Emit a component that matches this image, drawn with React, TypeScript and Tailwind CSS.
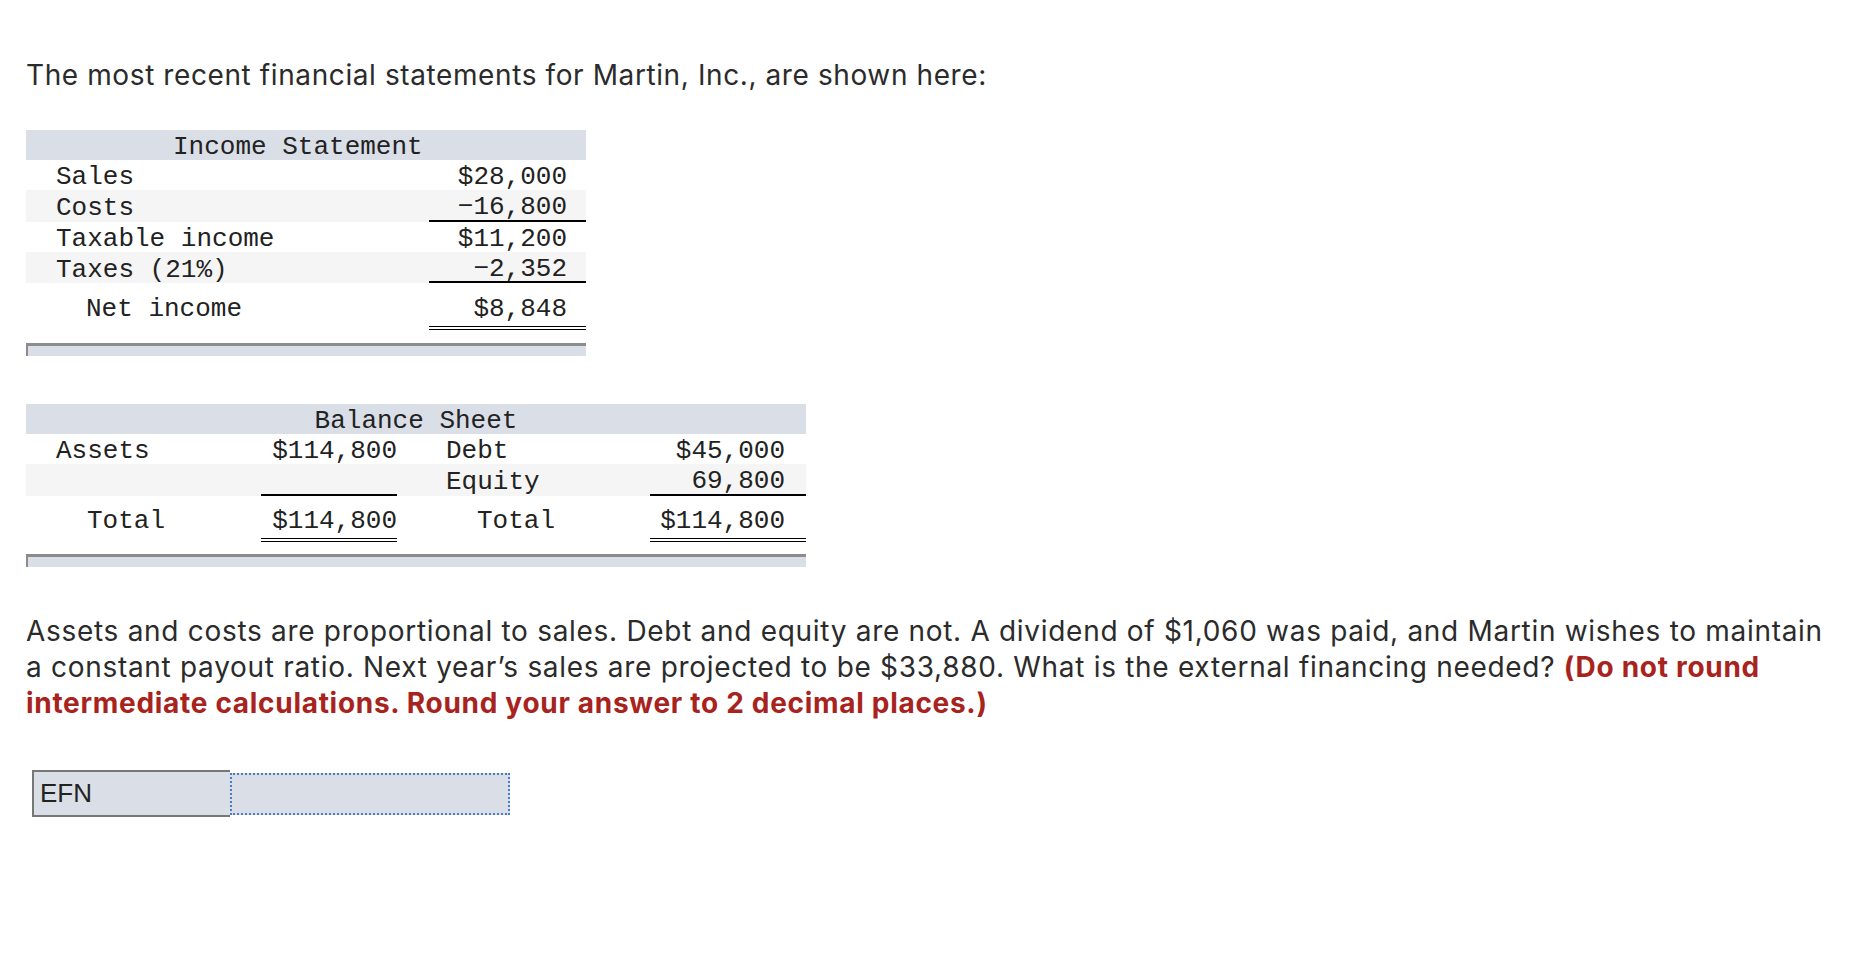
import React from 'react';

const mono = { fontFamily: '"Liberation Mono", "Courier New", monospace' };
const sans = { fontFamily: 'Inter, "Open Sans", sans-serif' };

const IncomeRow = ({
  label,
  value,
  shade,
  line,
  h,
}: {
  label: string;
  value: string;
  shade?: boolean;
  line?: boolean;
  h: string;
}) => (
  <div className={`flex ${h} ${shade ? 'bg-[#f5f5f5]' : 'bg-white'}`}>
    <div className="flex-1 pl-[30px] pt-[4px] flex items-center">{label}</div>
    <div
      className={`w-[157px] pr-[19px] pt-[4px] flex items-center justify-end ${
        line ? 'border-b-2 border-black' : ''
      }`}
    >
      {value}
    </div>
  </div>
);

const EndBar = ({ w }: { w: string }) => (
  <div className={`${w} h-[13px] bg-[#d9dee7] border-t-[3px] border-l-2 border-[#8c8c8c]`} />
);

const App = () => {
  return (
    <div className="min-h-[960px] bg-white pl-[26px] pt-[57px] text-[#2b2b2b]">
      <p className="text-[28px] leading-[36px] tracking-[0.6px] whitespace-nowrap" style={sans}>
        The most recent financial statements for Martin, Inc., are shown here:
      </p>

      {/* income statement */}
      <div className="mt-[37px] w-[560px] text-[26px] leading-[30px] text-[#222]" style={mono}>
        <div className="h-[30px] bg-[#d9dee7] pl-[147px] pt-[4px] flex items-center">Income Statement</div>
        <IncomeRow label="Sales" value="$28,000" h="h-[30px]" />
        <IncomeRow label="Costs" value="−16,800" h="h-[32px]" shade line />
        <IncomeRow label="Taxable income" value="$11,200" h="h-[30px]" />
        <IncomeRow label="Taxes (21%)" value="−2,352" h="h-[31px]" shade line />
        <div className="flex h-[47px]">
          <div className="flex-1 pl-[60px] pt-[11px]">Net income</div>
          <div className="w-[157px] pr-[19px] pt-[11px] text-right border-b-4 border-double border-black">
            $8,848
          </div>
        </div>
        <div className="mt-[13px]">
          <EndBar w="w-[560px]" />
        </div>
      </div>

      {/* balance sheet */}
      <div className="mt-[48px] w-[780px] text-[26px] leading-[30px] text-[#222]" style={mono}>
        <div className="h-[30px] bg-[#d9dee7] pt-[4px] flex items-center justify-center">Balance Sheet</div>
        <div className="flex h-[30px] pt-[4px] items-center">
          <div className="w-[235px] pl-[30px]">Assets</div>
          <div className="w-[136px] text-right">$114,800</div>
          <div className="w-[253px] pl-[49px]">Debt</div>
          <div className="w-[156px] pr-[21px] text-right">$45,000</div>
        </div>
        <div className="flex h-[32px] bg-[#f5f5f5]">
          <div className="w-[235px]" />
          <div className="w-[136px] border-b-2 border-black" />
          <div className="w-[253px] pl-[49px] pt-[4px] flex items-center">Equity</div>
          <div className="w-[156px] pr-[21px] pt-[4px] flex items-center justify-end border-b-2 border-black">
            69,800
          </div>
        </div>
        <div className="flex h-[46px] bg-white">
          <div className="w-[235px] pl-[61px] pt-[10px]">Total</div>
          <div className="w-[136px] pt-[10px] text-right border-b-4 border-double border-black">$114,800</div>
          <div className="w-[253px] pl-[80px] pt-[10px]">Total</div>
          <div className="w-[156px] pr-[21px] pt-[10px] text-right border-b-4 border-double border-black">
            $114,800
          </div>
        </div>
        <div className="mt-[12px]">
          <EndBar w="w-[780px]" />
        </div>
      </div>

      {/* question */}
      <p className="mt-[46px] text-[28px] leading-[36px] tracking-[0.7px] whitespace-nowrap" style={sans}>
        Assets and costs are proportional to sales. Debt and equity are not. A dividend of $1,060 was paid, and
        Martin wishes to maintain
        <br />a constant payout ratio. Next year’s sales are projected to be $33,880. What is the external financing
        needed?{' '}
        <b className="text-[#a8231d]">
          (Do not round
          <br />
          intermediate calculations. Round your answer to 2 decimal places.)
        </b>
      </p>

      {/* answer box */}
      <div className="mt-[49px] ml-[6px] flex items-center">
        <div
          className="w-[198px] h-[47px] bg-[#d9dee7] border-2 border-r-0 border-[#777] pl-[6px] flex items-center text-[26px] text-[#222]"
          style={{ fontFamily: '"Liberation Sans", Arial, sans-serif' }}
        >
          EFN
        </div>
        <div className="w-[280px] h-[42px] bg-[#d9dee7] border-2 border-dotted border-[#4a7cc6]" />
      </div>
    </div>
  );
};

export default App;
